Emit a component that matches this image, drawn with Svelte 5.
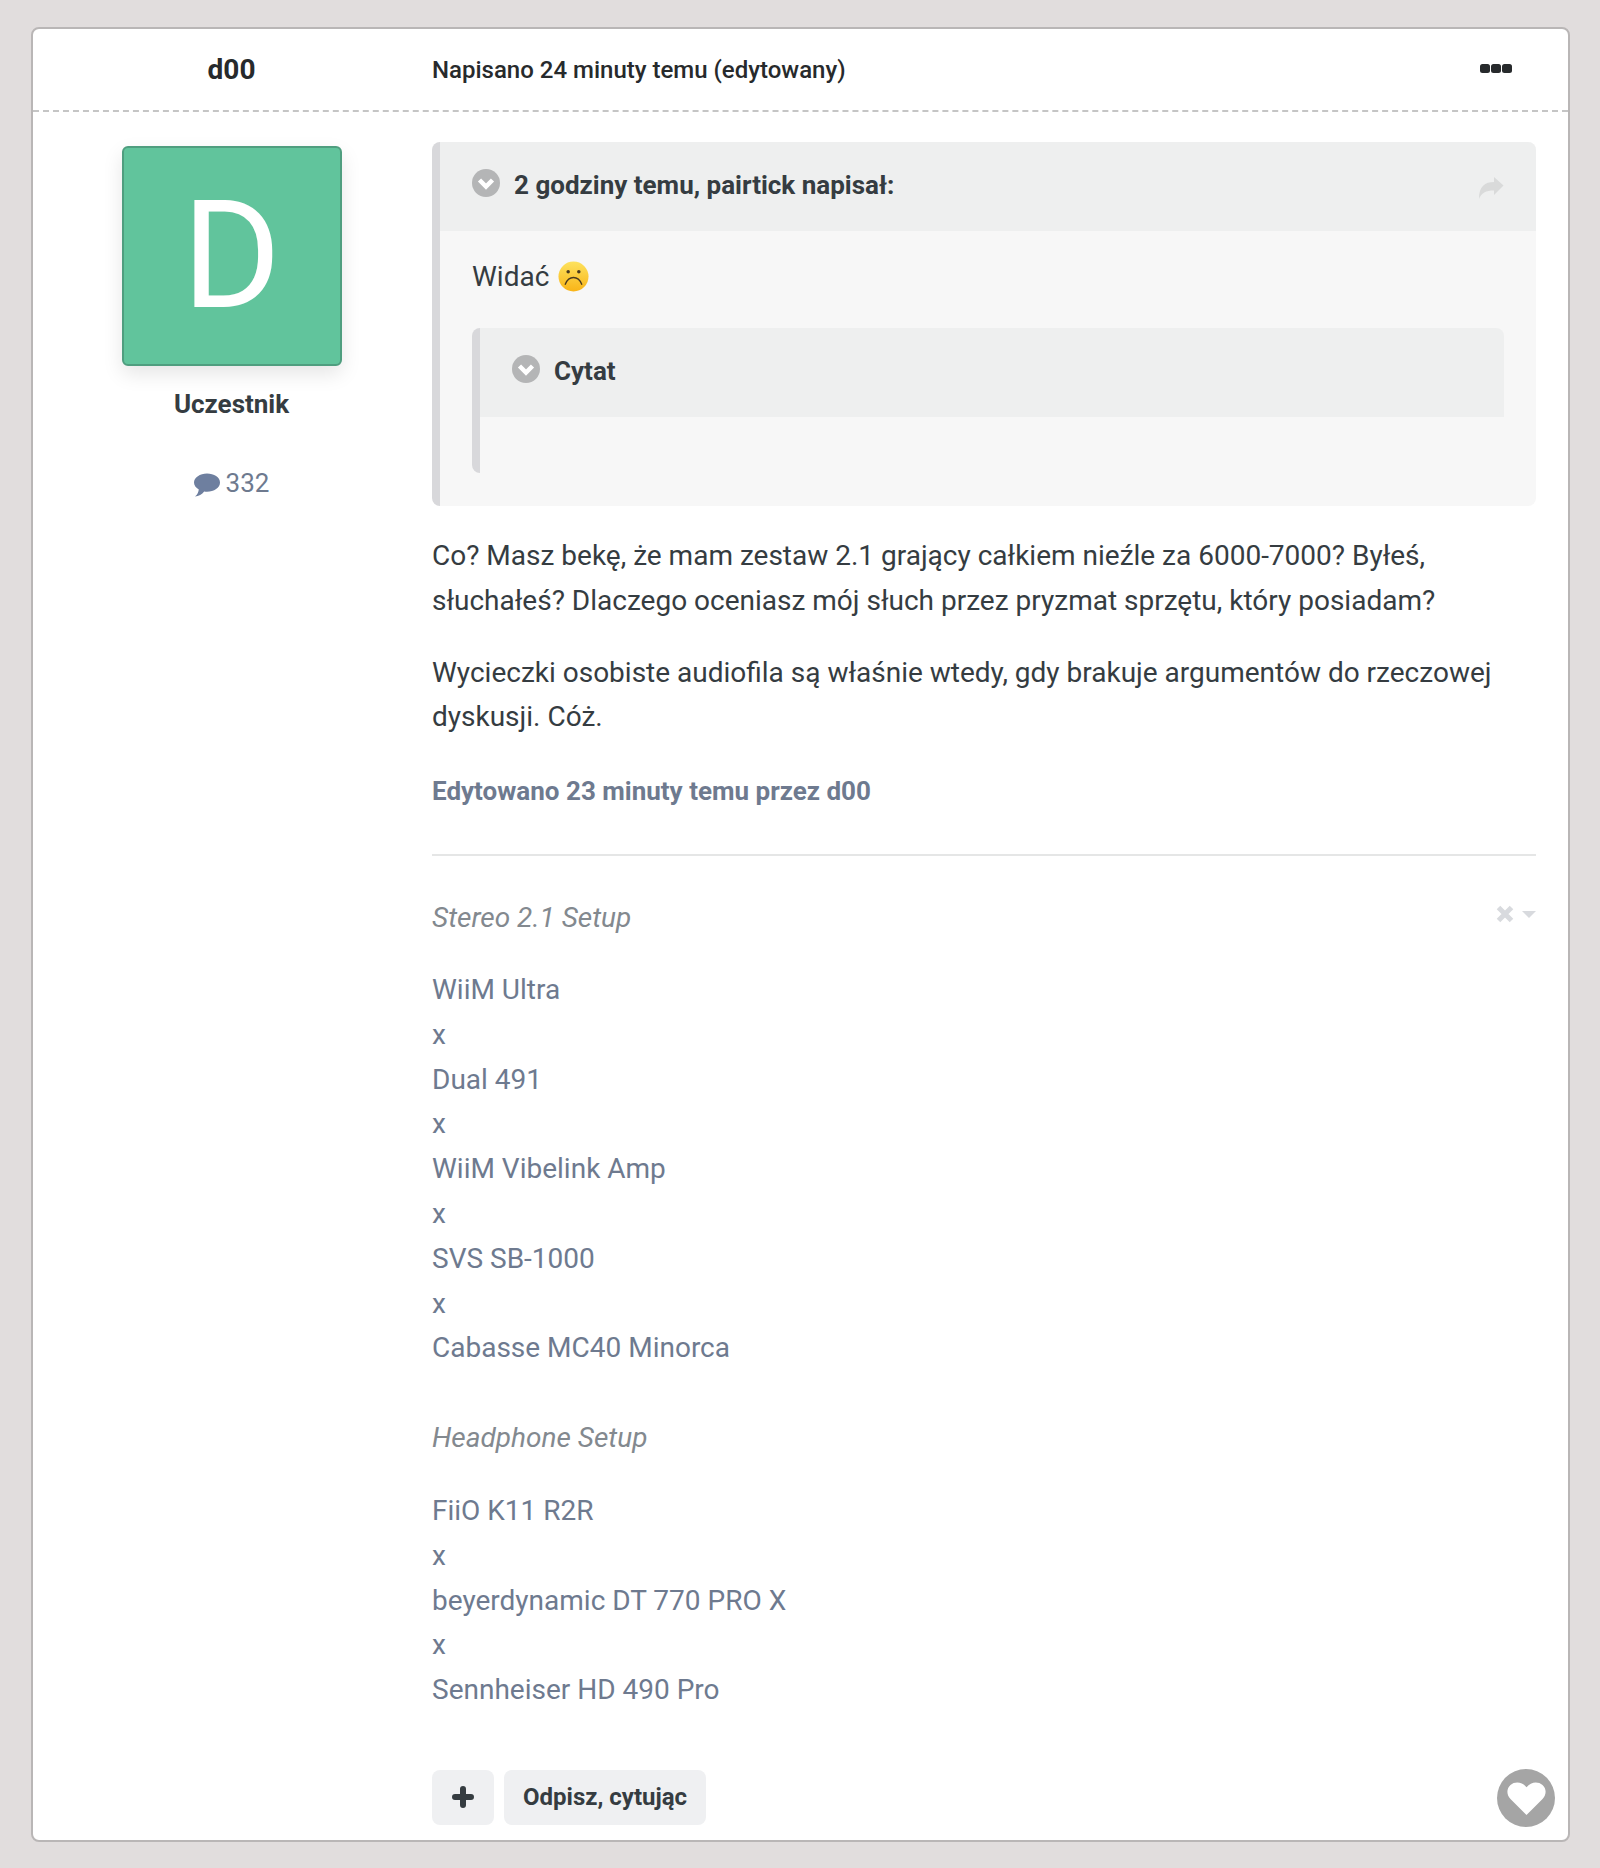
<script>
  const setup1 = ['WiiM Ultra','x','Dual 491','x','WiiM Vibelink Amp','x','SVS SB-1000','x','Cabasse MC40 Minorca'];
  const setup2 = ['FiiO K11 R2R','x','beyerdynamic DT 770 PRO X','x','Sennheiser HD 490 Pro'];
</script>

<div class="page">
  <article class="card">
    <header class="head">
      <h3 class="author">d00</h3>
      <div class="meta">Napisano 24 minuty temu (edytowany)</div>
      <div class="dots"><i></i><i></i><i></i></div>
    </header>
    <div class="main">
      <aside class="side">
        <div class="avatar">D</div>
        <div class="rank">Uczestnik</div>
        <div class="posts">
          <svg class="bubble" viewBox="0 0 26 24"><path d="M13 .5C6 .5 0 4.500 0 9.500c0 2.900 1.900 5.300 4.800 6.900-.3 2.500-1.300 5-3.800 7.100 3.800-.3 7-2.200 9.200-5 .9.100 1.800.2 2.800.2 7 0 13-3.800 13-9.200S20 .5 13 .5z"/></svg>
          <span>332</span>
        </div>
      </aside>
      <div class="content">
        <blockquote class="quote">
          <div class="qhead">
            <svg class="chev" viewBox="0 0 28 28"><circle cx="14" cy="14" r="14"/><path d="M7.500 11l6.500 6.500 6.500-6.500" /></svg>
            <span>2 godziny temu, pairtick napisał:</span>
            <svg class="share" viewBox="0 0 26 24"><path d="M25.500 9.500L16 1v5C7 6 1 10 1 23c2-6 7-8.500 15-8.500V19z"/></svg>
          </div>
          <div class="qbody">
            <p class="widac">Widać
              <svg class="emoji" viewBox="0 0 32 32">
                <defs><linearGradient id="g" x1="0" y1="0" x2="0" y2="1"><stop offset="0" stop-color="#fde25e"/><stop offset="1" stop-color="#f9b417"/></linearGradient></defs>
                <circle cx="16" cy="16" r="15.500" fill="url(#g)"/>
                <circle cx="10.500" cy="11" r="1.800" fill="#4a3a1e"/><circle cx="21.500" cy="11" r="1.800" fill="#4a3a1e"/>
                <path d="M7.500 24c2-5 5.500-7 8.500-7s6.500 2 8.500 7" fill="none" stroke="#4a3a1e" stroke-width="1.400" stroke-linecap="round"/>
              </svg>
            </p>
            <div class="quote inner">
              <div class="qhead">
                <svg class="chev" viewBox="0 0 28 28"><circle cx="14" cy="14" r="14"/><path d="M7.500 11l6.500 6.500 6.500-6.500" /></svg>
                <span>Cytat</span>
              </div>
              <div class="qempty"></div>
            </div>
          </div>
        </blockquote>
        <p class="para">Co? Masz bekę, że mam zestaw 2.1 grający całkiem nieźle za 6000-7000? Byłeś, słuchałeś? Dlaczego oceniasz mój słuch przez pryzmat sprzętu, który posiadam?</p>
        <p class="para second">Wycieczki osobiste audiofila są właśnie wtedy, gdy brakuje argumentów do rzeczowej dyskusji. Cóż.</p>
        <p class="edited">Edytowano 23 minuty temu przez d00</p>
        <div class="signature">
          <div class="sigctl">
            <svg class="x" viewBox="0 0 20 20"><path d="M3.500 3.500l13 13M16.500 3.500l-13 13"/></svg>
            <span class="caret"></span>
          </div>
          <p class="sigtitle">Stereo 2.1 Setup</p>
          <div class="list">{#each setup1 as l}<div>{l}</div>{/each}</div>
          <p class="sigtitle two">Headphone Setup</p>
          <div class="list">{#each setup2 as l}<div>{l}</div>{/each}</div>
        </div>
        <div class="actions">
          <div class="btn plus"><svg viewBox="0 0 22 22"><path d="M11 3v16M3 11h16"/></svg></div>
          <div class="btn">Odpisz, cytując</div>
          <div class="like"><svg viewBox="0 0 40 34"><path d="M20 34L3.500 17.500C-1 13-.5 6.500 3.500 3 8-.8 15.500-.5 20 5.500 24.500-.5 32-.8 36.500 3c4 3.500 4.500 10 0 14.500z"/></svg></div>
        </div>
      </div>
    </div>
  </article>
</div>

<style>
  :global(body) { margin: 0; background: #e1dddd; }
  .page { padding: 27px 30px 26px 31px; font-family: Roboto, sans-serif; color: #353c41; box-sizing: border-box; height: 1868px; }
  .card { background: #fff; border: 2px solid #b9b6b6; border-radius: 8px; width: 1539px; height: 1815px; box-sizing: border-box; }
  .head { display: flex; align-items: center; height: 83px; border-bottom: 2px dashed #c5c5c5; box-sizing: border-box; }
  .author { margin: 0; width: 397px; padding-right: 2px; text-align: center; font-size: 28px; font-weight: 700; color: #272a2c; }
  .meta { font-size: 24px; font-weight: 500; color: #272a2c; flex: 1; }
  .dots { display: flex; gap: 1px; margin: 0 56px 3px 0; }
  .dots i { width: 10px; height: 9px; border-radius: 2.500px; background: #272a2c; }
  .main { display: flex; }
  .side { width: 397px; padding-right: 2px; flex: none; display: flex; flex-direction: column; align-items: center; padding-top: 34px; }
  .avatar { width: 220px; height: 220px; box-sizing: border-box; background: #61c49c; border: 2px solid #4f9e7f; border-radius: 6px; box-shadow: 0 8px 20px rgba(0,0,0,.1); color: #fff; font-size: 151px; line-height: 216px; text-align: center; }
  .rank { font-size: 26px; font-weight: 700; margin-top: 19px; line-height: 38px; }
  .posts { display: flex; align-items: center; gap: 6px; margin-top: 41px; font-size: 26px; color: #6e7a8f; line-height: 38px; }
  .bubble { width: 26px; height: 24px; fill: #6e7f9f; margin-top: 3px; }
  .content { width: 1104px; padding-top: 30px; }
  .quote { margin: 0; border-left: 8px solid #d8d8db; border-radius: 8px; background: #f7f7f7; overflow: hidden; }
  .qhead { display: flex; align-items: center; height: 89px; background: #eeefef; padding: 0 32px 4px; font-size: 26px; font-weight: 700; box-sizing: border-box; }
  .chev { width: 28px; height: 28px; margin: 0 14px 3px 0; flex: none; }
  .chev circle { fill: #b4b5b6; }
  .chev path { fill: none; stroke: #fff; stroke-width: 4.500; }
  .share { width: 26px; height: 24px; margin-left: auto; fill: #d9dada; margin-top: 7px; }
  .qbody { padding: 0 32px 33px; }
  .widac { margin: 0; font-size: 28px; line-height: 45px; padding: 23px 0 29px; display: flex; align-items: center; gap: 9px; }
  .emoji { width: 31px; height: 31px; }
  .qempty { height: 56px; }
  .para { margin: 27px 0 0; font-size: 28px; line-height: 44.800px; }
  .content > .para:first-of-type { margin-top: 28px; }
  .edited { margin: 29px 0 0; font-size: 26px; font-weight: 700; line-height: 45px; color: #6e7a8f; }
  .signature { margin-top: 40px; border-top: 2px solid #e5e6e6; padding-top: 40px; position: relative; font-size: 28px; line-height: 44.800px; color: #6e7a8f; }
  .sigtitle { margin: 0 0 27px; font-style: italic; color: #83898f; }
  .sigtitle.two { margin: 45px 0 28px; }
  .sigctl { position: absolute; right: 0; top: 48px; display: flex; align-items: center; gap: 7px; }
  .x { width: 20px; height: 20px; fill: none; stroke: #d8dade; stroke-width: 5; }
  .caret { width: 0; height: 0; border: 7px solid transparent; border-top: 7px solid #d8dade; border-bottom: 0; }
  .actions { display: flex; gap: 10px; margin-top: 57px; position: relative; }
  .btn { height: 55px; background: #eff0f2; border-radius: 8px; display: flex; align-items: center; padding: 0 19px; font-size: 24px; font-weight: 700; }
  .plus { width: 62px; box-sizing: border-box; justify-content: center; padding: 0; }
  .plus svg { width: 22px; height: 22px; fill: none; stroke: #353c41; stroke-width: 6; stroke-linecap: round; }
  .like { position: absolute; right: -19px; top: -1px; width: 58px; height: 58px; border-radius: 50%; background: #a5a5a5; display: flex; align-items: center; justify-content: center; }
  .like svg { width: 39px; height: 33px; fill: #fff; margin-top: 1px; }
</style>
